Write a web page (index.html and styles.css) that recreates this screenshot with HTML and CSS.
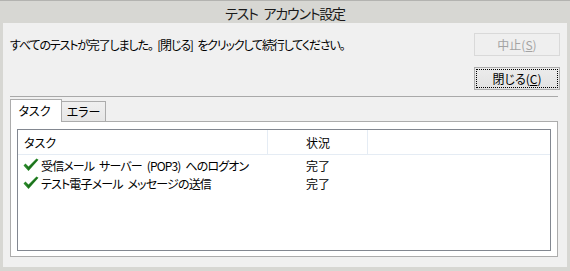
FILE: index.html
```html
<!DOCTYPE html>
<html lang="ja">
<head>
<meta charset="utf-8">
<title>テスト アカウント設定</title>
<link rel="stylesheet" href="styles.css">
</head>
<body>
<div class="window">
  <div class="titlebar">テスト アカウント設定</div>
  <div class="client">
    <div class="top-row">
      <p class="message">すべてのテストが完了しました。 [閉じる] をクリックして続行してください。</p>
      <button class="btn btn-disabled" disabled>中止(<u>S</u>)</button>
    </div>
    <div class="close-row">
      <button class="btn btn-default"><span class="focus">閉じる(<u>C</u>)</span></button>
    </div>
    <div class="sep"></div>
    <div class="tabs">
      <div class="tab tab-active">タスク</div>
      <div class="tab tab-inactive">エラー</div>
    </div>
    <div class="panel">
      <div class="listview">
        <div class="lv-header">
          <div class="hcol hcol-task">タスク</div>
          <div class="hcol hcol-status">状況</div>
          <div class="hcol hcol-rest"></div>
        </div>
        <div class="lv-row">
          <div class="cell cell-task">
            <svg class="check" width="16" height="14" viewBox="0 0 16 14"><polygon points="0.5,7.5 2.5,5.5 5.5,8.5 13.5,0.5 15.5,1.8 5.5,13" fill="#2b8a2b"/><polygon points="2.5,6.5 5.5,9.5 13.5,1.5 14.5,2 5.5,12" fill="#1c6e1c"/></svg>
            <span class="txt">受信メール サーバー (POP3) へのログオン</span>
          </div>
          <div class="cell cell-status">完了</div>
        </div>
        <div class="lv-row">
          <div class="cell cell-task">
            <svg class="check" width="16" height="14" viewBox="0 0 16 14"><polygon points="0.5,7.5 2.5,5.5 5.5,8.5 13.5,0.5 15.5,1.8 5.5,13" fill="#2b8a2b"/><polygon points="2.5,6.5 5.5,9.5 13.5,1.5 14.5,2 5.5,12" fill="#1c6e1c"/></svg>
            <span class="txt">テスト電子メール メッセージの送信</span>
          </div>
          <div class="cell cell-status">完了</div>
        </div>
      </div>
    </div>
  </div>
</div>
</body>
</html>
```

FILE: styles.css
```css
* { box-sizing: border-box; }
html, body { margin: 0; padding: 0; }
body {
  width: 570px;
  height: 271px;
  overflow: hidden;
  font-family: "Noto Sans CJK JP", "Noto Sans", sans-serif;
  font-feature-settings: "palt";
  font-size: 12px;
  color: #000;
  background: #d7d7d3;
}
.window {
  width: 570px;
  height: 271px;
  display: flex;
  flex-direction: column;
  border-top: 1px solid #b3b3b0;
  background: #d7d7d3;
}
.titlebar {
  height: 22px;
  display: flex;
  align-items: center;
  justify-content: center;
  font-size: 14px;
  letter-spacing: -1.2px;
  word-spacing: 4px;
  color: #1a1a1a;
  padding-top: 1px;
}
.client {
  margin: 0 3px 4px 3px;
  flex: 1;
  background: #f0f0f0;
  padding: 10px 7px 0 7px;
  display: flex;
  flex-direction: column;
}
.top-row {
  display: flex;
  align-items: center;
  justify-content: space-between;
  height: 23px;
}
.message {
  margin: 0;
  line-height: 16px;
  white-space: nowrap;
  letter-spacing: -1.15px;
  word-spacing: 3px;
}
.btn {
  width: 86px;
  height: 23px;
  font: inherit;
  font-size: 12px;
  padding: 0;
  margin: 0;
  display: flex;
  align-items: center;
  justify-content: center;
}
.btn u { text-underline-offset: 1px; }
.btn-disabled {
  background: #efefef;
  border: 1px solid #d9d9d9;
  color: #a3a3a3;
}
.close-row {
  display: flex;
  justify-content: flex-end;
  margin-top: 11px;
}
.btn-default {
  background: linear-gradient(#ececec, #e2e2e2);
  border: 1px solid #acacac;
  color: #000;
  padding: 1px;
}
.focus {
  width: 100%;
  height: 100%;
  border: 1px dotted #000;
  display: flex;
  align-items: center;
  justify-content: center;
}
.sep {
  margin-top: 6px;
  margin-right: 2px;
  height: 1px;
  background: #a9a9a9;
}
.tabs {
  margin-top: 2px;
  height: 22px;
  display: flex;
  align-items: flex-end;
}
.tab {
  display: flex;
  align-items: center;
  justify-content: center;
  border: 1px solid #acacac;
  border-bottom: none;
}
.tab-active {
  width: 52px;
  height: 23px;
  margin-bottom: -1px;
  background: #fff;
  position: relative;
  z-index: 1;
  padding-bottom: 2px;
  padding-right: 3px;
}
.tab-inactive {
  width: 45px;
  height: 20px;
  margin-left: -1px;
  background: linear-gradient(#f0f0f0, #e6e6e6);
}
.panel {
  width: 548px;
  height: 136px;
  border: 1px solid #acacac;
  background: #fff;
  padding: 7px 6px 5px 6px;
}
.listview {
  width: 534px;
  height: 122px;
  border: 1px solid #828790;
  background: #fff;
}
.lv-header {
  height: 25px;
  display: flex;
  border-bottom: 1px solid #e5ecf4;
}
.hcol {
  display: flex;
  align-items: center;
  border-right: 1px solid #e5ecf4;
}
.hcol-task { width: 250px; padding-left: 6px; }
.hcol-status { width: 100px; padding-left: 38px; }
.hcol-rest { flex: 1; border-right: none; }
.lv-row {
  height: 18px;
  display: flex;
  align-items: center;
}
.lv-header + .lv-row { margin-top: 1px; }
.cell-task {
  width: 250px;
  padding-left: 5px;
  display: flex;
  align-items: center;
  gap: 2px;
}
.txt { letter-spacing: -0.85px; word-spacing: 3px; }
.check { flex: none; }
.cell-status { padding-left: 38px; }
```
